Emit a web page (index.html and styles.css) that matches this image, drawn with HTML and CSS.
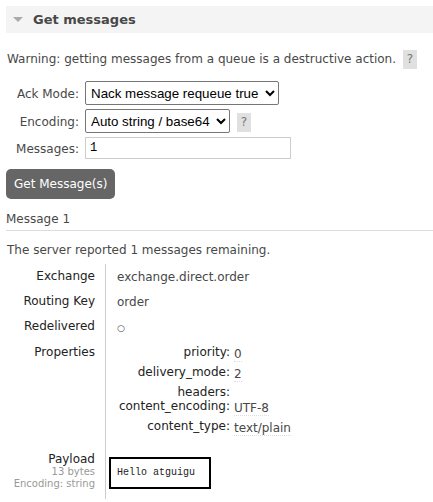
FILE: index.html
```html
<!DOCTYPE html>
<html lang="en">
<head>
    <meta charset="UTF-8">
    <meta name="viewport" content="width=device-width, initial-scale=1.0">
    <title>Get messages</title>
    <link rel="stylesheet" href="styles.css">
</head>
<body>

<div class="section">
    <h2 class="section-title"><span class="arrow"></span>Get messages</h2>

    <p class="warning">Warning: getting messages from a queue is a destructive action. <span class="help">?</span></p>

    <table class="form">
        <tr>
            <th><label for="ackmode">Ack Mode:</label></th>
            <td>
                <select id="ackmode" class="ack">
                    <option>Nack message requeue true</option>
                    <option>Automatic ack</option>
                    <option>Reject requeue true</option>
                </select>
            </td>
        </tr>
        <tr>
            <th><label for="encoding">Encoding:</label></th>
            <td>
                <select id="encoding" class="enc">
                    <option>Auto string / base64</option>
                    <option>base64</option>
                </select>
                <span class="help">?</span>
            </td>
        </tr>
        <tr>
            <th><label for="count">Messages:</label></th>
            <td><input type="text" id="count" value="1"></td>
        </tr>
    </table>

    <button class="get-btn">Get Message(s)</button>

    <h3 class="msg-title">Message 1</h3>
    <p class="remaining">The server reported 1 messages remaining.</p>

    <table class="facts">
        <tr>
            <th>Exchange</th>
            <td>exchange.direct.order</td>
        </tr>
        <tr>
            <th>Routing Key</th>
            <td>order</td>
        </tr>
        <tr>
            <th>Redelivered</th>
            <td><span class="bool">&#9675;</span></td>
        </tr>
        <tr>
            <th>Properties</th>
            <td class="props-cell">
                <table class="props">
                    <tr><th>priority:</th><td><span class="val">0</span></td></tr>
                    <tr><th>delivery_mode:</th><td><span class="val">2</span></td></tr>
                    <tr class="empty"><th>headers:</th><td></td></tr>
                    <tr><th>content_encoding:</th><td><span class="val">UTF-8</span></td></tr>
                    <tr><th>content_type:</th><td><span class="val">text/plain</span></td></tr>
                </table>
            </td>
        </tr>
        <tr class="payload-row">
            <th>
                Payload
                <sub>13 bytes</sub>
                <sub>Encoding: string</sub>
            </th>
            <td><pre class="payload">Hello atguigu</pre></td>
        </tr>
    </table>
</div>

</body>
</html>
```

FILE: styles.css
```css
body {
    font-family: Verdana, "DejaVu Sans", sans-serif;
    font-size: 12px;
    color: #484848;
    background-color: #ffffff;
    margin: 0;
    padding: 6px 0 0 6px;
}
.section-title {
    display: flex;
    align-items: center;
    height: 27px;
    margin: 0;
    padding-left: 7px;
    background-color: #f4f4f4;
    font-size: 13px;
    font-weight: bold;
    color: #484848;
}
.arrow {
    width: 0;
    height: 0;
    border-left: 5px solid transparent;
    border-right: 5px solid transparent;
    border-top: 5px solid #aaaaaa;
    margin-right: 10px;
}
.warning {
    margin: 17px 0 10px 1px;
}
.help {
    display: inline-block;
    background-color: #e0e0e0;
    color: #777;
    padding: 2px 4px;
    margin-left: 3px;
    line-height: 15px;
}
/* Form */
.form {
    border-collapse: collapse;
}
.form th {
    font-weight: normal;
    text-align: right;
    padding: 3px 6px 2px 0;
    width: 73px;
}
.form td {
    padding: 2px 0;
}
.form select {
    font-family: Arial, "Liberation Sans", sans-serif;
    font-size: 13.33px;
    color: #000;
    height: 24px;
    padding: 0 1px;
    border: 1px solid #767676;
    border-radius: 2px;
    background: #fff;
}
.form select.ack { width: 194px; }
.form select.enc { width: 145px; }
.form input[type="text"] {
    width: 206px;
    height: 22px;
    box-sizing: border-box;
    border: 1px solid #cccccc;
    font-family: "Liberation Mono", monospace;
    font-size: 12px;
    padding: 1px 4px;
}
.get-btn {
    margin-top: 8px;
    background-color: #666666;
    color: #ffffff;
    border: none;
    border-radius: 5px;
    font-family: Verdana, "DejaVu Sans", sans-serif;
    font-size: 12px;
    padding: 0 8px;
    height: 30px;
    cursor: pointer;
}
.get-btn:hover {
    background-color: #444444;
}
/* Message */
.msg-title {
    font-size: 12px;
    font-weight: normal;
    margin: 13px 0 0 0;
    padding-bottom: 4px;
    border-bottom: 1px solid #dddddd;
}
.remaining {
    margin: 12px 0 7px 1px;
}
.facts {
    border-collapse: collapse;
}
.facts > tbody > tr > th {
    font-weight: normal;
    color: #222;
    text-align: right;
    vertical-align: top;
    width: 89px;
    line-height: 14px;
    padding: 5px 10px 6px 0;
    border-right: 1px solid #cccccc;
}
.facts > tbody > tr > td {
    vertical-align: top;
    line-height: 14px;
    padding: 6px 0 5px 11px;
}
.bool {
    font-size: 9px;
}
.facts .props-cell {
    padding-top: 5px;
}
.props {
    border-collapse: collapse;
}
.props th {
    font-weight: normal;
    color: #222;
    text-align: right;
    vertical-align: top;
    width: 113px;
    padding: 0 4px 5px 0;
}
.props td {
    vertical-align: top;
    padding: 2px 0 4px 0;
}
.props tr.empty th {
    padding-bottom: 0;
}
.val {
    border-bottom: 1px dotted #dddddd;
}
.payload-row th {
    padding-top: 8px !important;
}
.payload-row sub {
    display: block;
    font-size: 10px;
    color: #999999;
    vertical-align: baseline;
    line-height: 12px;
}
.payload-row td {
    padding: 13px 0 10px 3px !important;
}
.payload {
    display: inline-block;
    margin: 0;
    border: 2px solid #000000;
    width: 86px;
    padding: 7px 6px;
    font-family: "Liberation Mono", monospace;
    font-size: 10px;
    line-height: 14px;
    color: #222;
}
```
